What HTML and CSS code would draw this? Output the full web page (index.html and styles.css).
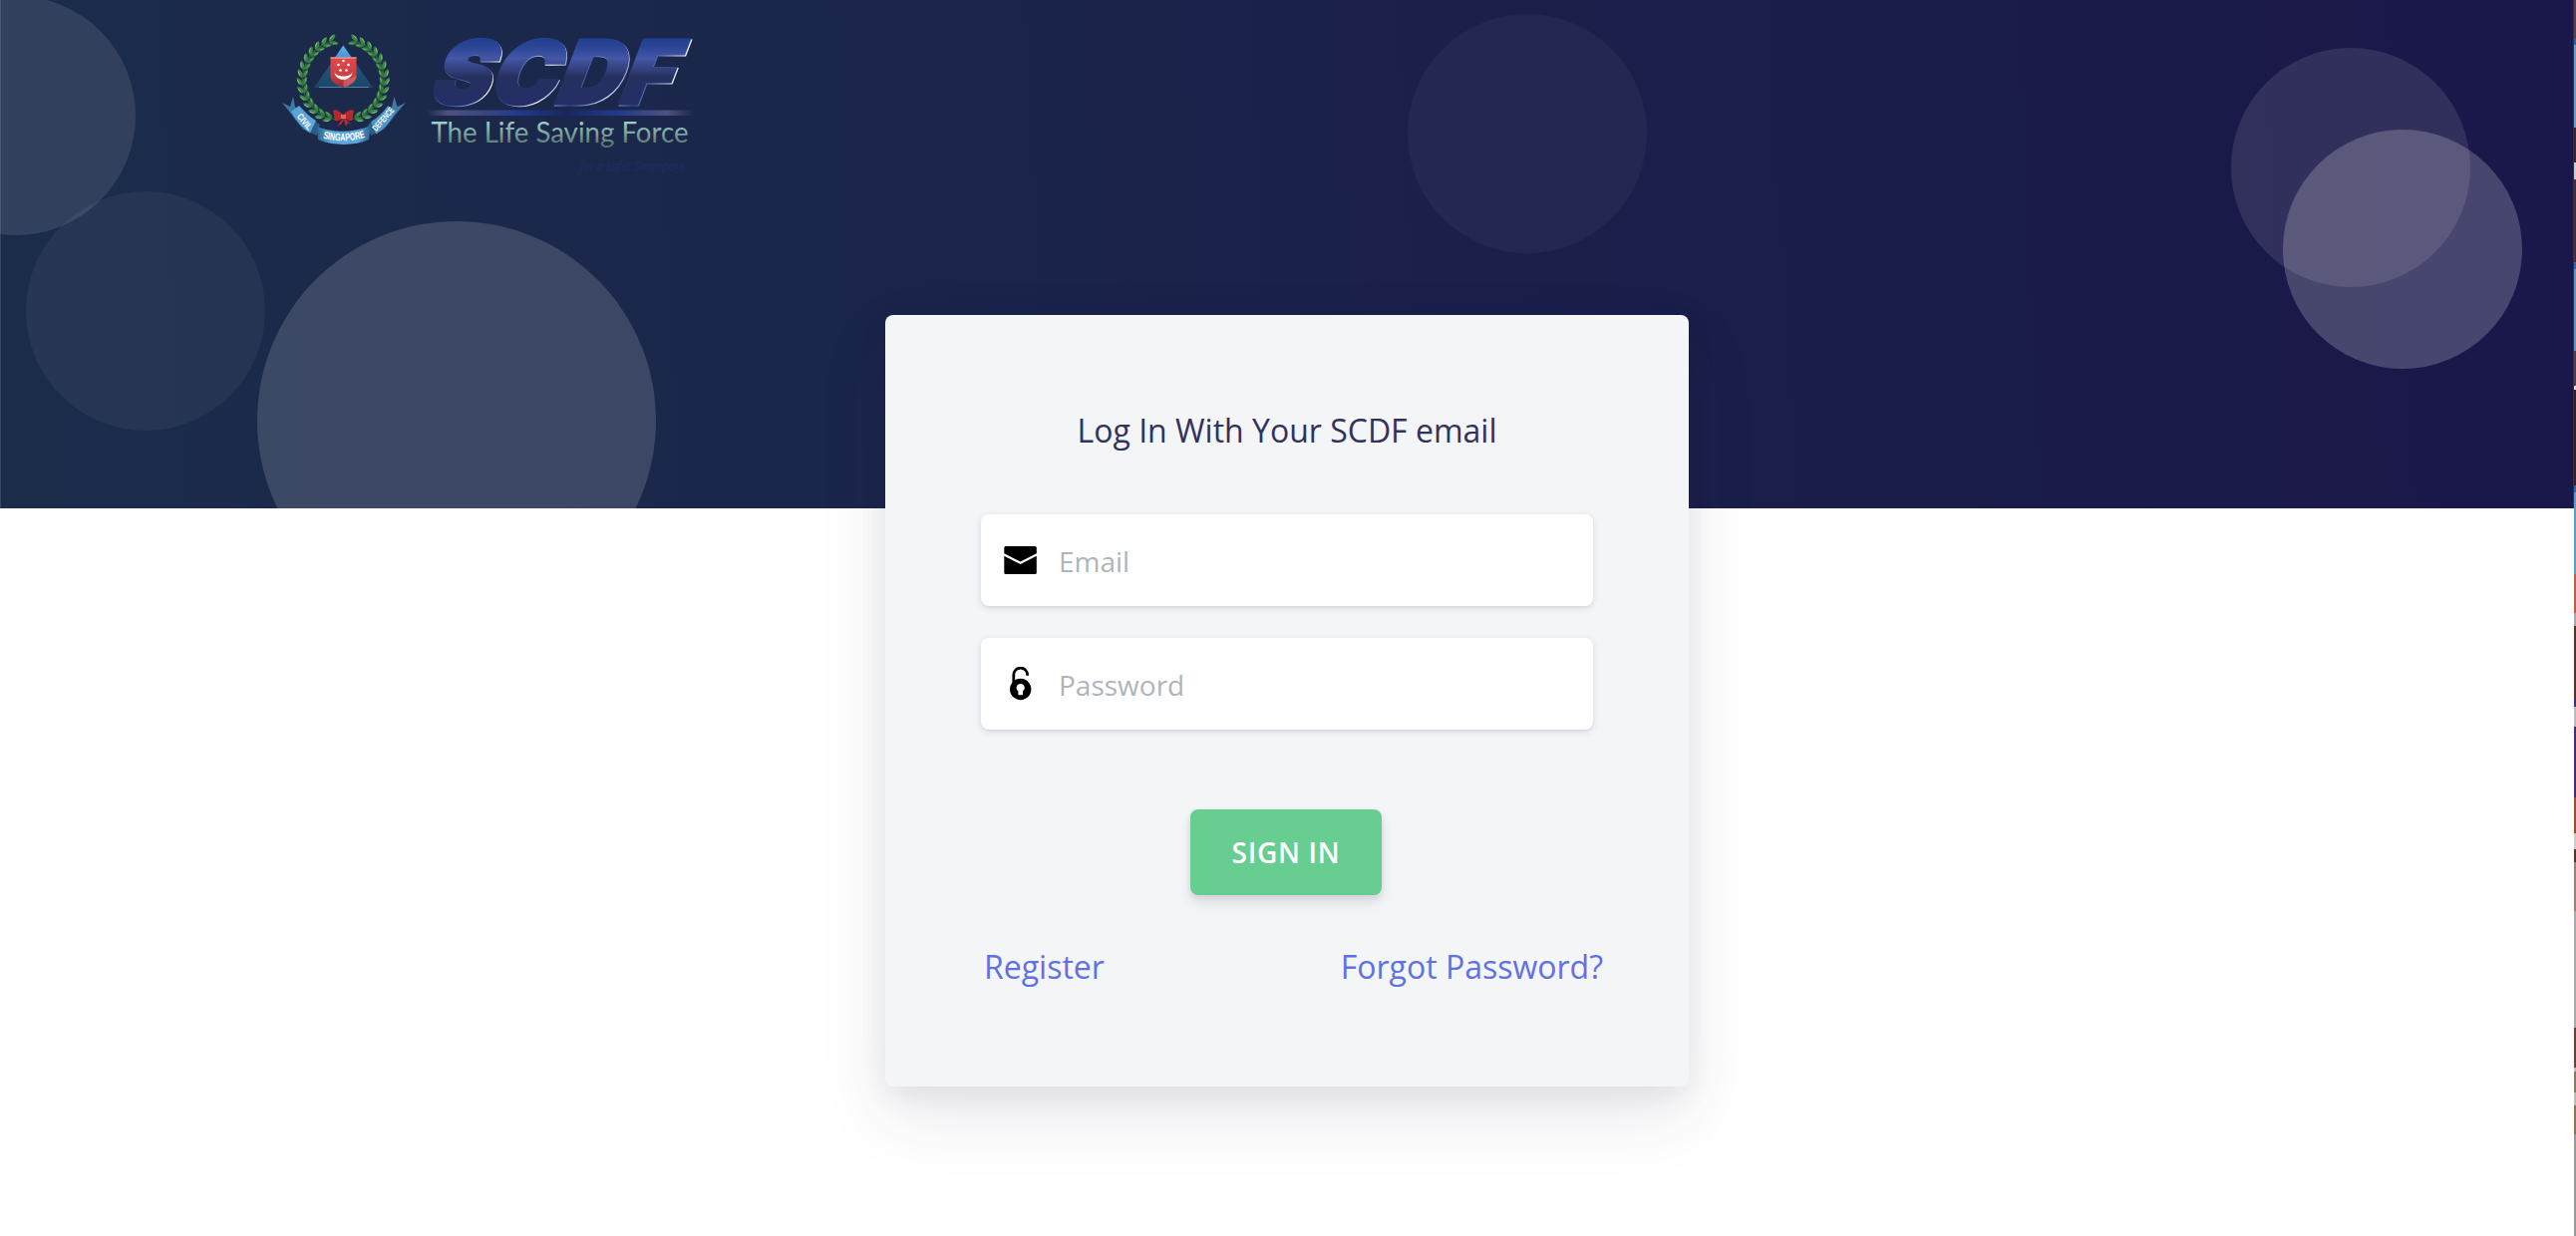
FILE: index.html
```html
<!DOCTYPE html>
<html lang="en">
<head>
<meta charset="utf-8">
<title>SCDF Login</title>
<link rel="stylesheet" href="styles.css">
</head>
<body>
<div class="screen">
<main class="page">
  <header class="hero">
    <span class="shape shape-1"></span>
    <span class="shape shape-2"></span>
    <span class="shape shape-3"></span>
    <span class="shape shape-4"></span>
    <span class="shape shape-5"></span>
    <span class="shape shape-6"></span>
    <svg class="logo" viewBox="0 0 460 180" role="img" aria-label="SCDF The Life Saving Force">
      <defs>
        <linearGradient id="steel" gradientUnits="userSpaceOnUse" x1="0" y1="-70" x2="0" y2="0">
          <stop offset="0" stop-color="#1f3c8c"/><stop offset=".18" stop-color="#2a4597"/><stop offset=".35" stop-color="#4456a5"/><stop offset=".62" stop-color="#26305f"/><stop offset="1" stop-color="#252d66"/>
        </linearGradient>
        <linearGradient id="shine" gradientUnits="userSpaceOnUse" x1="0" y1="0" x2="245" y2="0">
          <stop offset="0" stop-color="#fff"/><stop offset=".09" stop-color="#2846a0"/><stop offset=".2" stop-color="#8f9bd0"/><stop offset=".25" stop-color="#fff"/><stop offset=".33" stop-color="#3150a8"/><stop offset=".46" stop-color="#fff"/><stop offset=".6" stop-color="#2846a0"/><stop offset=".74" stop-color="#dfe3f5"/><stop offset=".86" stop-color="#2846a0"/><stop offset="1" stop-color="#fff"/>
        </linearGradient>
        <linearGradient id="bar" x1="0" x2="1" y1="0" y2="0">
          <stop offset="0" stop-color="#50517e" stop-opacity="0"/><stop offset=".08" stop-color="#50517e"/><stop offset=".2" stop-color="#3d4680"/><stop offset=".34" stop-color="#213b8c"/><stop offset=".52" stop-color="#1b2660"/><stop offset=".72" stop-color="#213b8c"/><stop offset=".9" stop-color="#50517e"/><stop offset="1" stop-color="#50517e" stop-opacity="0"/>
        </linearGradient>
        <linearGradient id="mint" gradientUnits="userSpaceOnUse" x1="0" y1="110" x2="0" y2="138">
          <stop offset="0" stop-color="#a6d6d0"/><stop offset="1" stop-color="#4f6d68"/>
        </linearGradient>
        <linearGradient id="peak" x1="0" x2="0" y1="0" y2="1">
          <stop offset="0" stop-color="#5ab5e6"/><stop offset=".4" stop-color="#3f87cf"/><stop offset=".43" stop-color="#24547f"/><stop offset="1" stop-color="#1d4668"/>
        </linearGradient>
        <linearGradient id="ribbon" x1="0" x2="1" y1="0" y2="0">
          <stop offset="0" stop-color="#2c638f"/><stop offset=".25" stop-color="#5ba5db"/><stop offset=".75" stop-color="#5ba5db"/><stop offset="1" stop-color="#2c638f"/>
        </linearGradient>
        <linearGradient id="shield" x1="0" x2="0" y1="0" y2="1">
          <stop offset="0" stop-color="#e0484a"/><stop offset=".6" stop-color="#cf3f42"/><stop offset="1" stop-color="#8d2d35"/>
        </linearGradient>
        <g id="sprig">
          <path d="M-7 0H4" stroke="#2c6a3c" stroke-width="1"/>
          <path transform="rotate(-26)" d="M0-.5C2-3.200 6-3.600 9.500-.8C7 2 3 2 0-.5Z" fill="#3d8647"/>
          <path transform="rotate(26)" d="M0 .5C2 3.200 6 3.600 9.500.8C7-2 3-2 0 .5Z" fill="#357a40"/>
          <path transform="rotate(-26)" d="M3-1.800L7.500-1.600" stroke="#8dbb8d" stroke-width=".9"/>
          <path transform="rotate(26)" d="M4 1L8 1" stroke="#7eae80" stroke-width=".8"/>
        </g>
        <g id="branch">
          <use href="#sprig" transform="rotate(-20) translate(0 -41)"/>
          <use href="#sprig" transform="rotate(-31) translate(0 -41)"/>
          <use href="#sprig" transform="rotate(-42) translate(0 -41)"/>
          <use href="#sprig" transform="rotate(-53) translate(0 -41)"/>
          <use href="#sprig" transform="rotate(-64) translate(0 -41)"/>
          <use href="#sprig" transform="rotate(-75) translate(0 -41)"/>
          <use href="#sprig" transform="rotate(-86) translate(0 -41)"/>
          <use href="#sprig" transform="rotate(-97) translate(0 -41)"/>
          <use href="#sprig" transform="rotate(-108) translate(0 -41)"/>
          <use href="#sprig" transform="rotate(-119) translate(0 -41)"/>
          <use href="#sprig" transform="rotate(-130) translate(0 -41)"/>
          <use href="#sprig" transform="rotate(-141) translate(0 -41)"/>
          <use href="#sprig" transform="rotate(-152) translate(0 -41)"/>
          <use href="#sprig" transform="rotate(-163) translate(0 -40)"/>
        </g>
        <path id="scroll" d="M61 128Q85 135 109 127"/>
      </defs>

      <g transform="translate(84.300 70.500)">
        <use href="#branch"/>
        <use href="#branch" transform="scale(-1 1)"/>
      </g>
      <path d="M84.300 35.500L114 78H55Z" fill="url(#peak)"/>
      <path d="M60 77.500H110" stroke="#5d93b5" stroke-width=".8"/>
      <path d="M71.500 47.500H97.500V66C97.500 71.500 93 75 84.500 78C76 75 71.500 71.500 71.500 66Z" fill="url(#shield)"/>
      <path d="M71.500 48H97.500" stroke="#f5b9b5" stroke-width="1"/>
      <path d="M84.500 69V78C93 75 97.500 71.500 97.500 66C93 69 88 69.500 84.500 69Z" fill="#d9787a" opacity=".55"/>
      <path d="M75.500 62.500C78 67.800 91 67.800 93.500 62.500C92 72.300 77 72.300 75.500 62.500Z" fill="#fff"/>
      <g fill="#fff"><circle cx="84.500" cy="51" r="1.300"/><circle cx="79.500" cy="55" r="1.300"/><circle cx="89.500" cy="55" r="1.300"/><circle cx="81.500" cy="60.500" r="1.300"/><circle cx="87.500" cy="60.500" r="1.300"/></g>

      <path d="M23 93L31 97L34 87L36 97L42 105L36 109Z" fill="#4079a6"/>
      <path d="M147 93L138.500 97L135.500 87L133 97L127 105L133 109Z" fill="#4079a6"/>
      <path d="M40 100L61 115L58 126L44 120L32 105Z" fill="#2c5b82"/>
      <path d="M129 100L109 115L112 126L125 120L137 105Z" fill="#2c5b82"/>
      <path d="M40 96C45 101 50 107 57 111L51 123.500C43 118 36 110 32 102Z" fill="#5ba5db"/>
      <path d="M129 96C125 102 119 108 112 112L117 124.500C127 119 133 110 137 102Z" fill="#4d93c8"/>
      <path d="M58 117C74 123.500 94 123.500 112 116L110 130C95 136.500 75 136.500 59 130Z" fill="url(#ribbon)"/>
      <path d="M84.300 105C80 101 76 99 74 101L76 111C79 112 82 110 84 108L78 117L83 114L84.500 110L87 117L89 113L93 116L86 108C89 110 92 112 93 111L95 101C92 99 88 101 84.300 105Z" fill="#b5282d"/>
      <path d="M82 105H87V109H82Z" fill="#df6362"/>
      <text class="scroll-text" font-size="10.500" textLength="43" lengthAdjust="spacingAndGlyphs"><textPath href="#scroll" startOffset="3">SINGAPORE</textPath></text>
      <text class="scroll-text" font-size="9" transform="translate(37.500 107) rotate(50)" textLength="18" lengthAdjust="spacingAndGlyphs">CIVIL</text>
      <text class="scroll-text" font-size="9" transform="translate(117.500 122) rotate(-49)" textLength="28" lengthAdjust="spacingAndGlyphs">DEFENCE</text>

      <g class="wordmark" transform="translate(165 94) skewX(-21)">
        <text class="wordmark-shine" x="3.500" y="1" textLength="242" lengthAdjust="spacingAndGlyphs">SCDF</text>
        <text class="wordmark-face" x="2" y="-.5" textLength="242" lengthAdjust="spacingAndGlyphs">SCDF</text>
      </g>
      <rect x="168" y="100.500" width="268" height="5.500" fill="url(#bar)"/>
      <text class="slogan" x="172.500" y="132.500" textLength="258" lengthAdjust="spacingAndGlyphs">The Life Saving Force</text>
      <text class="subline" x="304" y="161" textLength="123" lengthAdjust="spacingAndGlyphs">. . . for a safer Singapore</text>
    </svg>
  </header>

  <form class="card">
    <h1 class="title">Log In With Your SCDF email</h1>
    <label class="field">
      <svg class="icon" viewBox="0 0 34 34"><path d="M1.300 10.200V4.500Q1.300 3 2.800 3H32.300Q33.800 3 33.800 4.500V10.200L17.600 18.500ZM1.300 12.700L17.600 21L33.800 12.700V29.500Q33.800 31 32.300 31H2.800Q1.300 31 1.300 29.500Z"/></svg>
      <input class="input" type="email" placeholder="Email">
    </label>
    <label class="field">
      <svg class="icon" viewBox="0 0 34 34"><g transform="translate(.4 -.2)"><path d="M10.400 18V8.200A6.900 6.900 0 0 1 24.200 8.200V9" fill="none" stroke="#000" stroke-width="2.800"/><path fill-rule="evenodd" d="M17.300 12A10.700 10.700 0 1 0 17.300 33.400A10.700 10.700 0 1 0 17.300 12ZM17.300 17.200A4 4 0 0 1 19.600 24.500V28.500H15V24.500A4 4 0 0 1 17.300 17.200Z"/></g></svg>
      <input class="input" type="password" placeholder="Password">
    </label>
    <button class="submit" type="button">SIGN IN</button>
    <nav class="links">
      <a class="link" href="#">Register</a>
      <a class="link" href="#">Forgot Password?</a>
    </nav>
  </form>
</main>
<aside class="backdrop"></aside>
</div>
</body>
</html>
```
FILE: styles.css
```css
* { box-sizing: border-box; }

body {
  margin: 0;
  background: #fff;
  font-family: "Open Sans", "Liberation Sans", sans-serif;
  overflow: hidden;
}

.screen {
  display: grid;
  grid-template-columns: 1fr 2px;
  height: 1240px;
}

.page {
  display: flex;
  flex-direction: column;
  align-items: center;
}

/* Hero banner */
.hero {
  position: relative;
  align-self: stretch;
  flex: none;
  height: 510px;
  padding: 10px 260px;
  overflow: hidden;
  background: linear-gradient(87deg, #1b2c4b 0%, #1a174a 100%);
  box-shadow: inset 1px 0 #36455f, inset -1px 0 #302d62;
}

.shape {
  position: absolute;
  width: 240px;
  height: 240px;
  border-radius: 50%;
}

.shape-1 { left: -104px; top: -4px; background: rgba(255, 255, 255, .1); }
.shape-2 { left: 26px; top: 192px; background: rgba(255, 255, 255, .05); }
.shape-3 { left: 258px; top: 222px; width: 400px; height: 400px; background: rgba(255, 255, 255, .15); }
.shape-4 { left: 1412px; top: 14px; background: rgba(255, 255, 255, .04); }
.shape-5 { left: 2238px; top: 48px; background: rgba(255, 255, 255, .1); }
.shape-6 { left: 2290px; top: 130px; background: rgba(255, 255, 255, .2); }

.logo {
  position: relative;
  display: block;
  width: 460px;
  height: 180px;
}

.scroll-text {
  fill: #fff;
  font-family: "Liberation Sans", sans-serif;
  font-weight: 700;
}

.wordmark {
  font-family: Inter, "Liberation Sans", sans-serif;
  font-size: 88px;
  font-weight: 900;
  stroke-width: 3px;
}

.wordmark-shine { fill: url(#shine); stroke: url(#shine); }
.wordmark-face { fill: url(#steel); stroke: url(#steel); }

.slogan {
  fill: url(#mint);
  font-family: Lato, sans-serif;
  font-size: 28px;
}

.subline {
  fill: #222c64;
  font-size: 12px;
  font-style: italic;
}

/* Login card */
.card {
  position: relative;
  display: flex;
  flex-direction: column;
  align-items: center;
  width: 806px;
  height: 774px;
  margin-top: -194px;
  padding: 94px 96px 0;
  border-radius: 8px;
  background: #f4f5f7;
  box-shadow: 0 30px 70px rgba(50, 50, 93, .1), 0 10px 30px rgba(0, 0, 0, .07);
}

.title {
  margin: 0 0 62px;
  color: #32325d;
  font-size: 32px;
  font-weight: 400;
  line-height: 44px;
}

.field {
  display: flex;
  align-items: center;
  gap: 22px;
  width: 614px;
  height: 92px;
  margin-bottom: 32px;
  padding: 2px 22px 0;
  border-radius: 8px;
  background: #fff;
  box-shadow: 0 2px 6px rgba(50, 50, 93, .15), 0 2px 0 rgba(0, 0, 0, .02);
}

.icon {
  flex: none;
  width: 34px;
  height: 34px;
  margin-top: -2px;
}

.input {
  flex: 1;
  padding: 0;
  border: 0;
  outline: 0;
  background: none;
  color: #8898aa;
  font: 400 28px/42px "Open Sans", sans-serif;
}

.input::placeholder { color: #adb5bd; }

.submit {
  width: 192px;
  height: 86px;
  margin: 48px 2px 0 0;
  padding: 0;
  border: 0;
  border-radius: 8px;
  background: #67cd91;
  color: #fff;
  font: 600 28px/42px "Open Sans", sans-serif;
  letter-spacing: .7px;
  box-shadow: 0 8px 12px rgba(50, 50, 93, .11), 0 2px 6px rgba(0, 0, 0, .08);
}

.links {
  display: flex;
  align-self: stretch;
  justify-content: space-between;
  margin: 50px -10px 0 3px;
}

.link {
  color: #5e72e4;
  font-size: 32px;
  line-height: 44px;
  text-decoration: none;
}

/* Sliver of the desktop beside the window */
.backdrop {
  background: linear-gradient(
    #5a4040 0 39px, #2a62a0 39px 45px, #6a9ec0 45px 128px, #3c2420 128px 163px,
    #ccc 163px 180px, #4a2c2c 180px 263px, #3565a0 263px 270px, #5f98bd 270px 352px,
    #553c40 352px 387px, #ddd 387px 391px, #3a2018 391px 487px, #3565a0 487px 494px,
    #5b9fc4 494px 576px, #bb6044 576px 615px, #aaa 615px 628px, #5a3028 628px 700px,
    #4a2a80 700px 709px, #bbb 709px 729px, #4a2a78 729px 800px, #9a5030 800px 836px,
    #ccc 836px 852px, #5a3028 852px 865px, #a08070 865px 914px, #aaa 914px 1031px,
    #6a4030 1031px 1071px, #bbb 1071px 1075px, #8a7a60 1075px 1096px, #bbb 1096px 1109px,
    #8a7550 1109px 1138px, #999 1138px 1240px);
}
```
